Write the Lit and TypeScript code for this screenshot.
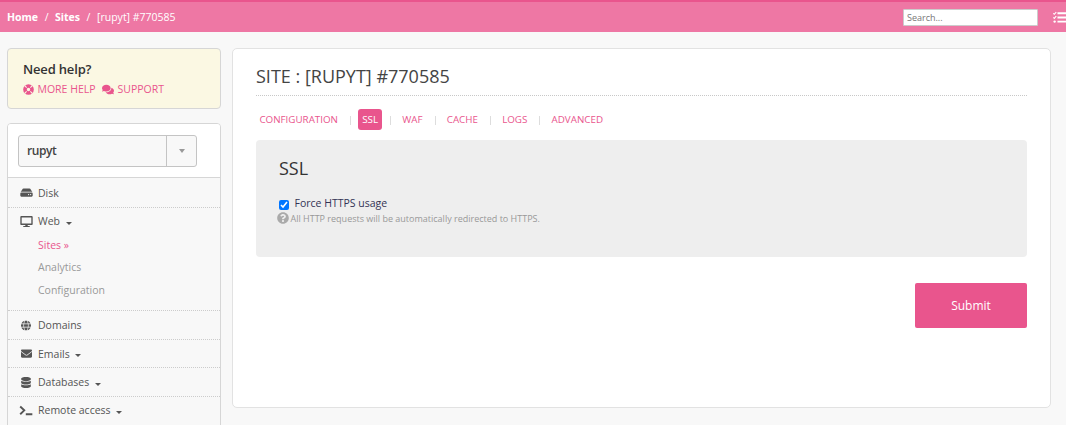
import { LitElement, html, css, svg, nothing } from "lit";
import { customElement } from "lit/decorators.js";

const ICONS: Record<string, { box: string; body: unknown }> = {
  disk: { box: "0 0 576 512", body: svg`<path d="M576 304v96c0 26.51-21.49 48-48 48H48c-26.51 0-48-21.49-48-48v-96c0-26.51 21.49-48 48-48h480c26.51 0 48 21.49 48 48zm-48-80a79.557 79.557 0 0 1 30.777 6.165L462.25 85.374A48.003 48.003 0 0 0 422.311 64H153.689a48 48 0 0 0-39.938 21.374L17.223 230.165A79.557 79.557 0 0 1 48 224h480zm-48 96c-17.673 0-32 14.327-32 32s14.327 32 32 32 32-14.327 32-32-14.327-32-32-32zm-96 0c-17.673 0-32 14.327-32 32s14.327 32 32 32 32-14.327 32-32-14.327-32-32-32z"/>` },
  desktop: { box: "0 0 576 512", body: svg`<path d="M528 0H48C21.5 0 0 21.5 0 48v320c0 26.5 21.5 48 48 48h192l-16 48h-72c-13.3 0-24 10.7-24 24s10.7 24 24 24h272c13.3 0 24-10.7 24-24s-10.7-24-24-24h-72l-16-48h192c26.5 0 48-21.5 48-48V48c0-26.5-21.5-48-48-48zm-16 352H64V64h448v288z"/>` },
  globe: { box: "0 0 496 512", body: svg`<path d="M336.5 160C322 70.7 287.8 8 248 8s-74 62.7-88.5 152h177zM152 256c0 22.2 1.2 43.5 3.3 64h185.3c2.1-20.5 3.3-41.8 3.3-64s-1.2-43.5-3.3-64H155.3c-2.1 20.5-3.3 41.8-3.3 64zm324.7-96c-28.6-67.9-86.5-120.4-158-141.6 24.4 33.8 41.2 84.7 50 141.6h108zM177.2 18.4C105.8 39.6 47.8 92.1 19.3 160h108c8.7-56.9 25.5-107.8 49.9-141.6zM487.4 192H372.7c2.1 21 3.3 42.5 3.3 64s-1.2 43-3.3 64h114.6c5.5-20.5 8.6-41.8 8.6-64s-3.1-43.5-8.5-64zM120 256c0-21.5 1.2-43 3.3-64H8.6C3.2 212.5 0 233.8 0 256s3.2 43.5 8.6 64h114.6c-2-21-3.2-42.5-3.2-64zm39.5 96c14.5 89.3 48.7 152 88.5 152s74-62.7 88.5-152h-177zm159.3 141.6c71.4-21.2 129.4-73.7 158-141.6h-108c-8.8 56.9-25.6 107.8-50 141.6zM19.3 352c28.6 67.9 86.5 120.4 158 141.6-24.4-33.8-41.2-84.7-50-141.6h-108z"/>` },
  envelope: { box: "0 0 512 512", body: svg`<path d="M502.3 190.8c3.9-3.1 9.7-.2 9.7 4.7V400c0 26.5-21.5 48-48 48H48c-26.5 0-48-21.5-48-48V195.6c0-5 5.7-7.8 9.7-4.7 22.4 17.4 52.1 39.5 154.1 113.6 21.1 15.4 56.7 47.8 92.2 47.6 35.7.3 72-32.8 92.3-47.6 102-74.1 131.6-96.3 154-113.7zM256 320c23.2.4 56.6-29.2 73.4-41.4 132.7-96.3 142.8-104.7 173.4-128.7 5.8-4.5 9.2-11.5 9.2-18.9v-19c0-26.5-21.5-48-48-48H48c-26.5 0-48 21.5-48 48v19c0 7.4 3.4 14.3 9.2 18.9 30.6 23.9 40.7 32.4 173.4 128.7 16.8 12.2 50.2 41.8 73.4 41.4z"/>` },
  database: { box: "0 0 448 512", body: svg`<path d="M448 73v46c0 40-100 73-224 73S0 159 0 119V73C0 33 100 0 224 0s224 33 224 73zM448 176v103c0 40-100 73-224 73S0 319 0 279V176c48 33 136 48 224 48s176-15 224-48zM448 336v103c0 40-100 73-224 73S0 479 0 439V336c48 33 136 48 224 48s176-15 224-48z"/>` },
  terminal: { box: "0 0 640 512", body: svg`<path d="M50 70 240 250 50 430M310 432H615" fill="none" stroke="currentColor" stroke-width="88"/>` },
  ring: { box: "0 0 512 512", body: svg`<circle cx="256" cy="256" r="164" fill="none" stroke="currentColor" stroke-width="168"/><path d="M68 68l96 96M444 68l-96 96M68 444l96-96M444 444l-96-96" stroke="#fbf8e3" stroke-width="52" transform="translate(15 15) scale(.94)"/>` },
  comments: { box: "0 0 576 512", body: svg`<path d="M416 192c0-88.4-93.1-160-208-160S0 103.6 0 192c0 34.3 14.1 65.9 38 92-13.4 30.2-35.5 54.2-35.8 54.5-2.2 2.3-2.8 5.7-1.5 8.7S4.8 352 8 352c36.6 0 66.9-12.3 88.7-25 32.2 15.7 70.3 25 111.3 25 114.9 0 208-71.6 208-160zm122 220c23.9-26 38-57.7 38-92 0-66.9-53.5-124.2-129.3-148.1.9 6.6 1.3 13.3 1.3 20.1 0 105.9-107.7 192-240 192-10.8 0-21.3-.8-31.7-1.9C207.8 439.6 281.8 480 368 480c41 0 79.1-9.2 111.3-25 21.8 12.7 52.1 25 88.7 25 3.2 0 6.1-1.9 7.3-4.8 1.3-2.9.7-6.3-1.5-8.7-.3-.3-22.4-24.2-35.8-54.5z"/>` },
  question: { box: "0 0 512 512", body: svg`<path d="M504 256c0 136.997-111.043 248-248 248S8 392.997 8 256C8 119.083 119.043 8 256 8s248 111.083 248 248zM262.655 90c-54.497 0-89.255 22.957-116.549 63.758-3.536 5.286-2.353 12.415 2.715 16.258l34.699 26.31c5.205 3.947 12.621 3.008 16.665-2.122 17.864-22.658 30.113-35.797 57.303-35.797 20.429 0 45.698 13.148 45.698 32.958 0 14.976-12.363 22.667-32.534 33.976C247.128 238.528 216 254.941 216 296v4c0 6.627 5.373 12 12 12h56c6.627 0 12-5.373 12-12v-1.333c0-28.462 83.186-29.647 83.186-106.667 0-58.002-60.165-102-116.531-102zM256 338c-25.365 0-46 20.635-46 46 0 25.364 20.635 46 46 46s46-20.636 46-46c0-25.365-20.635-46-46-46z"/>` },
  tasks: { box: "0 0 512 512", body: svg`<path d="M12 90l38 38 78-88M12 250l38 38 78-88" fill="none" stroke="currentColor" stroke-width="44"/><circle cx="64" cy="416" r="46"/><path d="M176 54h336v76H176zM176 218h336v76H176zM176 380h336v76H176z"/>` },
};

const icon = (name: string) =>
  html`<svg class="icon ${name}" viewBox=${ICONS[name].box} fill="currentColor" aria-hidden="true">${ICONS[name].body}</svg>`;

interface Entry { name: string; icon: string; size: string; menu?: boolean; }

@customElement("app-root")
export class AppRoot extends LitElement {
  static styles = css`
    :host { display: block; height: 425px; overflow: hidden; background: #f8f8f8; font: 10.5px/16px "Open Sans", sans-serif; color: #555; }
    * { box-sizing: border-box; }
    svg { display: block; flex: none; }
    h1, h2, h3, p { margin: 0; font-weight: 400; }
    .top { height: 32px; border-top: 2px solid #e9558d; background: #ee77a4; color: #fff; display: flex; align-items: center; padding: 0 0 0 7px; }
    .crumbs { flex: 1; display: flex; white-space: pre; }
    .crumbs b { font-weight: 700; }
    .sep { width: 17px; text-align: center; }
    .search { width: 135px; height: 17px; border: 1px solid #ccc; border-radius: 1px; padding: 0 3px; background: #fff; font: 9px "Open Sans", sans-serif; margin: 1px 15px 0 0; outline: 0; }
    .search::placeholder { color: #777; }
    .icon.tasks { width: 13px; height: 13px; }
    .body { display: flex; gap: 11px; padding: 16px 15px 0 7px; align-items: flex-start; }
    .side { width: 214px; flex: none; display: flex; flex-direction: column; gap: 14px; }
    .help { height: 61px; border: 1px solid #d6d6d6; border-radius: 4px; background: #fbf8e3; padding: 11px 15px; }
    .help h3 { font-size: 13px; line-height: 18px; font-weight: 600; letter-spacing: -0.17px; color: #333; }
    .links { display: flex; align-items: center; color: #e9558d; margin-top: 3px; }
    .icon.ring { width: 11px; height: 11px; margin-right: 3.5px; }
    .icon.comments { width: 12px; height: 11px; margin: 1px 4px 0 6px; }
    .nav { border: 1px solid #d6d6d6; border-radius: 4px; background: #f8f8f8; height: 330px; overflow: hidden; }
    .account { height: 54px; background: #fff; border-bottom: 1px solid #d6d6d6; padding: 11px 10px; }
    .select { width: 179px; height: 32px; border: 1px solid #c4c4c4; border-radius: 3px; background: #f8f8f8; display: flex; font-size: 12px; color: #444; line-height: 30px; }
    .select .value { flex: 1; padding-left: 8px; font-weight: 600; letter-spacing: -0.4px; }
    .select .arrow { width: 30px; border-left: 1px solid #c4c4c4; display: flex; align-items: center; justify-content: center; }
    .arrow i { border: 3.5px solid transparent; border-top: 4px solid #999; border-bottom: 0; }
    .group { border-bottom: 1px dotted #ccc; }
    .group:last-child { border-bottom: 0; }
    .item { display: flex; align-items: center; }
    .r26 { height: 26px; } .r27 { height: 27px; } .r28 { height: 28px; } .r29 { height: 29px; }
    .slot { width: 30px; padding-left: 12px; display: flex; }
    .icon.disk { width: 13px; height: 11px; } .icon.desktop { width: 13px; height: 11px; }
    .icon.globe { width: 10px; height: 11px; margin-left: 1px; } .icon.envelope { width: 11px; height: 11px; margin-left: 1px; }
    .icon.database { width: 10px; height: 11px; margin-left: 1px; } .icon.terminal { width: 14px; height: 11px; margin-left: -1px; }
    .caret { border: 3px solid transparent; border-top-color: #555; border-bottom: 0; margin: 4px 0 0 5.5px; }
    .sub { padding: 0 0 9px 30px; color: #999; }
    .sub div { height: 22.4px; line-height: 22px; }
    .sub .on { color: #e9558d; }
    .panel { flex: 1; height: 360px; border: 1px solid #e2e2e2; border-radius: 5px; background: #fff; padding: 15px 23px; }
    h1 { font-size: 18px; line-height: 24px; height: 32px; border-bottom: 1px dotted #c8c8c8; color: #444; }
    .tabs { display: flex; align-items: center; height: 21px; margin: 13px 0 10px; font-size: 9.8px; color: #e9558d; }
    .tab { padding: 0 4px; height: 21px; line-height: 21px; border-radius: 3px; }
    .tab:first-child { padding-left: 3.4px; }
    .tab.on { background: #e9558d; color: #fff; }
    .bar { width: 1px; height: 9px; background: #ddd; margin: 2px 7.1px 0 8.1px; }
    .card { height: 117px; border-radius: 4px; background: #eee; padding: 16px 23px; }
    h2 { font-size: 18px; line-height: 25px; color: #333; }
    .check { display: flex; color: #335; margin-top: 14px; }
    .check input { width: 10px; height: 10px; margin: 5px 5.5px 0 0; }
    .hint { display: flex; align-items: center; font-size: 9px; line-height: 14px; color: #999; margin-left: -2px; }
    .hint span { padding-top: 1px; }
    .icon.question { width: 12px; height: 12px; margin: -1px 1.5px 0 0; color: #aaa; }
    .submit { display: block; margin: 26px 0 0 auto; width: 112px; height: 45px; border: 0; border-radius: 2px; background: #e9558d; color: #fff; font: 12px "Open Sans", sans-serif; padding: 0; }
  `;

  private entries: Entry[] = [
    { name: "Disk", icon: "disk", size: "r29" },
    { name: "Web", icon: "desktop", size: "r26", menu: true },
    { name: "Domains", icon: "globe", size: "r28" },
    { name: "Emails", icon: "envelope", size: "r27", menu: true },
    { name: "Databases", icon: "database", size: "r28", menu: true },
    { name: "Remote access", icon: "terminal", size: "r26", menu: true },
  ];

  private tabs = ["CONFIGURATION", "SSL", "WAF", "CACHE", "LOGS", "ADVANCED"];

  render() {
    return html`
      <header class="top">
        <nav class="crumbs"><b>Home</b><span class="sep">/</span><b>Sites</b><span class="sep">/</span><span>[rupyt] #770585</span></nav>
        <input class="search" placeholder="Search..." />
        ${icon("tasks")}
      </header>
      <div class="body">
        <aside class="side">
          <section class="help">
            <h3>Need help?</h3>
            <div class="links">${icon("ring")}<span>MORE HELP</span>${icon("comments")}<span>SUPPORT</span></div>
          </section>
          <nav class="nav">
            <div class="account"><div class="select"><span class="value">rupyt</span><span class="arrow"><i></i></span></div></div>
            ${this.entries.map((e) => html`
              <div class="group">
                <div class="item ${e.size}"><span class="slot">${icon(e.icon)}</span><span>${e.name}</span>${e.menu ? html`<i class="caret"></i>` : nothing}</div>
                ${e.name === "Web" ? html`<div class="sub"><div class="on">Sites »</div><div>Analytics</div><div>Configuration</div></div>` : nothing}
              </div>`)}
          </nav>
        </aside>
        <main class="panel">
          <h1>SITE : [RUPYT] #770585</h1>
          <div class="tabs">
            ${this.tabs.map((t, i) => html`${i ? html`<span class="bar"></span>` : nothing}<span class="tab ${t === "SSL" ? "on" : ""}">${t}</span>`)}
          </div>
          <section class="card">
            <h2>SSL</h2>
            <label class="check"><input type="checkbox" checked /><span>Force HTTPS usage</span></label>
            <p class="hint">${icon("question")}<span>All HTTP requests will be automatically redirected to HTTPS.</span></p>
          </section>
          <button class="submit">Submit</button>
        </main>
      </div>`;
  }
}
